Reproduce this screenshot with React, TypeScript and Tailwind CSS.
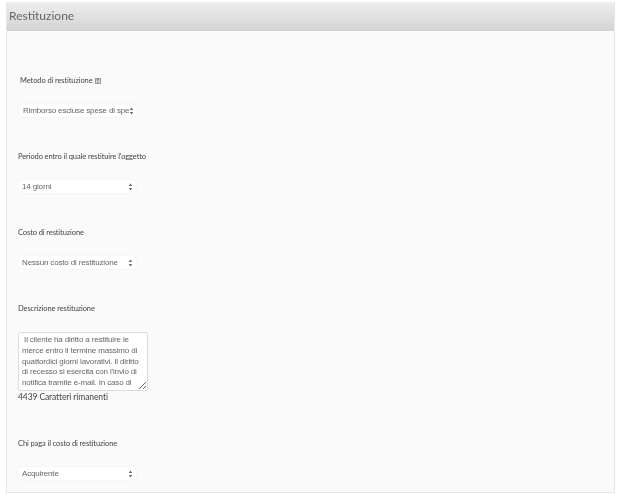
const selectArrows = (
  <svg className="pointer-events-none absolute right-[3px] top-[2.5px]" width="5" height="8" viewBox="0 0 5 8">
    <path d="M2.5 0.5 L4.2 3 L0.8 3 Z M2.5 7.5 L4.2 5 L0.8 5 Z" fill="#666" />
  </svg>
);

function ReturnSelect({ value, className = "" }: { value: string; className?: string }) {
  return (
    <div className={`relative h-[13px] w-[118px] ${className}`}>
      <select
        defaultValue={value}
        className="block h-[13px] w-full appearance-none rounded-[3px] bg-white pl-[4px] pr-[8px] font-['Liberation_Sans',sans-serif] text-[8px] leading-[13px] tracking-[-0.15px] text-[#666] shadow-[0_0_1px_#d0d0d0]"
      >
        <option>{value}</option>
      </select>
      {selectArrows}
    </div>
  );
}

function FieldLabel({ children, className = "" }: { children: React.ReactNode; className?: string }) {
  return <div className={`h-[12px] text-[7.5px] leading-[12px] tracking-[-0.1px] text-[#444] ${className}`}>{children}</div>;
}

export default function App() {
  return (
    <div className="h-[495px] w-[622px] overflow-hidden bg-white pl-[6px] pt-[2px] font-['Lato',sans-serif]">
      <div className="h-[491px] w-[609px] border border-t-0 border-[#e6e6e6] bg-[#fafafa]">
        {/* Header */}
        <div className="flex h-[29px] items-center bg-gradient-to-b from-[#efefef] to-[#d3d3d3] pb-[2px] pl-[2px]">
          <h2 className="text-[12px] font-normal text-[#666]">Restituzione</h2>
        </div>

        <div className="pl-[11px]">
          <FieldLabel className="mt-[44px] flex items-center pl-[2px]">
            Metodo di restituzione
            <span className="ml-[2px] flex h-[6px] w-[6px] items-center justify-center border border-[#999] bg-[#ddd] text-[5px] font-bold leading-none text-[#333]">
              ?
            </span>
          </FieldLabel>
          <ReturnSelect value="Rimborso escluse spese di spedizione" className="ml-[1px] mt-[17px]" />

          <FieldLabel className="mt-[34px]">Periodo entro il quale restituire l'oggetto</FieldLabel>
          <ReturnSelect value="14 giorni" className="mt-[17px]" />

          <FieldLabel className="mt-[34px]">Costo di restituzione</FieldLabel>
          <ReturnSelect value="Nessun costo di restituzione" className="mt-[17px]" />

          <FieldLabel className="mt-[34px]">Descrizione restituzione</FieldLabel>
          <textarea
            readOnly
            className="mt-[17px] block h-[59px] w-[130px] resize rounded-[2px] border border-[#ddd] bg-white px-[3px] py-[2px] font-['Liberation_Sans',sans-serif] text-[8px] leading-[10.8px] tracking-[-0.15px] text-[#666]"
            defaultValue=" Il cliente ha diritto a restituire le merce entro il termine massimo di quattordici giorni lavorativi. Il diritto di recesso si esercita con l'invio di notifica tramite e-mail. In caso di recesso il cliente dovrà restituire la merce integra."
          />
          <div className="text-[8.5px] leading-[13px] tracking-[-0.1px] text-[#444]">4439 Caratteri rimanenti</div>

          <FieldLabel className="mt-[34px]">Chi paga il costo di restituzione</FieldLabel>
          <ReturnSelect value="Acquirente" className="mt-[17px]" />
        </div>
      </div>
    </div>
  );
}
